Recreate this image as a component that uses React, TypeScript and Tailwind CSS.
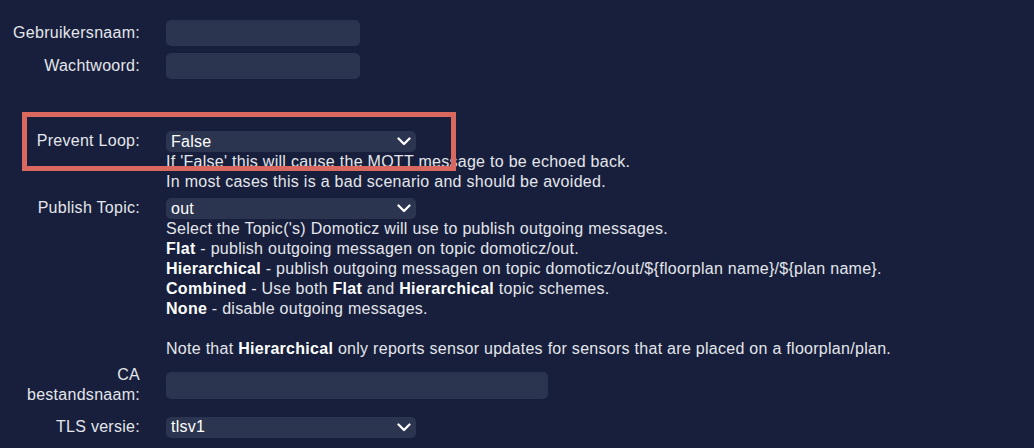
import React from "react";

const Chevron = () => (
  <svg width="14" height="9" viewBox="0 0 14 9" className="shrink-0">
    <polyline points="1.5,1.5 7,7 12.5,1.5" fill="none" stroke="#ffffff" strokeWidth="2.3" strokeLinecap="round" strokeLinejoin="round" />
  </svg>
);

const Select = ({ value }: { value: string }) => (
  <div className="w-[250px] h-[21px] rounded-[5px] bg-[#2c3550] flex items-center justify-between pl-[5px] pr-[5px] text-white text-[16px] leading-[20px]">
    <span>{value}</span>
    <Chevron />
  </div>
);

const Label = ({ children }: { children: React.ReactNode }) => (
  <div className="w-[140px] pl-[12px] shrink-0 text-right text-[#e4e6eb] leading-[20px]">{children}</div>
);

export default function App() {
  return (
    <div
      className="relative w-[1034px] h-[448px] bg-[#171f3c] text-[16px] leading-[20px] tracking-[0.28px] text-[#e4e6eb] overflow-hidden"
      style={{ fontFamily: '"Liberation Sans", Arial, sans-serif' }}
    >
      <div className="flex flex-col pt-[20px]">
        <div className="flex items-center gap-[26px]">
          <Label>Gebruikersnaam:</Label>
          <div className="w-[194px] h-[26px] rounded-[5px] bg-[#2c3550]" />
        </div>
        <div className="flex items-center gap-[26px] mt-[7px]">
          <Label>Wachtwoord:</Label>
          <div className="w-[194px] h-[26px] rounded-[5px] bg-[#2c3550]" />
        </div>

        <div className="flex items-start gap-[26px] mt-[52px]">
          <Label>Prevent Loop:</Label>
          <div className="flex flex-col">
            <Select value="False" />
            <div>If 'False' this will cause the MQTT message to be echoed back.</div>
            <div>In most cases this is a bad scenario and should be avoided.</div>
          </div>
        </div>

        <div className="flex items-start gap-[26px] mt-[6px]">
          <Label>Publish Topic:</Label>
          <div className="flex flex-col">
            <Select value="out" />
            <div>Select the Topic('s) Domoticz will use to publish outgoing messages.</div>
            <div>
              <b className="text-white">Flat</b> - publish outgoing messagen on topic domoticz/out.
            </div>
            <div>
              <b className="text-white">Hierarchical</b> - publish outgoing messagen on topic domoticz/out/${"{"}floorplan name{"}"}/${"{"}plan name{"}"}.
            </div>
            <div>
              <b className="text-white">Combined</b> - Use both <b className="text-white">Flat</b> and <b className="text-white">Hierarchical</b> topic schemes.
            </div>
            <div>
              <b className="text-white">None</b> - disable outgoing messages.
            </div>
            <div className="h-[20px]" />
            <div>
              Note that <b className="text-white">Hierarchical</b> only reports sensor updates for sensors that are placed on a floorplan/plan.
            </div>
          </div>
        </div>

        <div className="flex items-center gap-[26px] mt-[6px]">
          <Label>CA bestandsnaam:</Label>
          <div className="w-[382px] h-[27px] rounded-[5px] bg-[#2c3550]" />
        </div>

        <div className="flex items-center gap-[26px] mt-[11px]">
          <Label>TLS versie:</Label>
          <div className="h-[22px] flex items-center">
            <Select value="tlsv1" />
          </div>
        </div>
      </div>

      <div className="absolute left-[22px] top-[112px] w-[434px] h-[59px] border-[5px] border-[#d9695f]" />
    </div>
  );
}
